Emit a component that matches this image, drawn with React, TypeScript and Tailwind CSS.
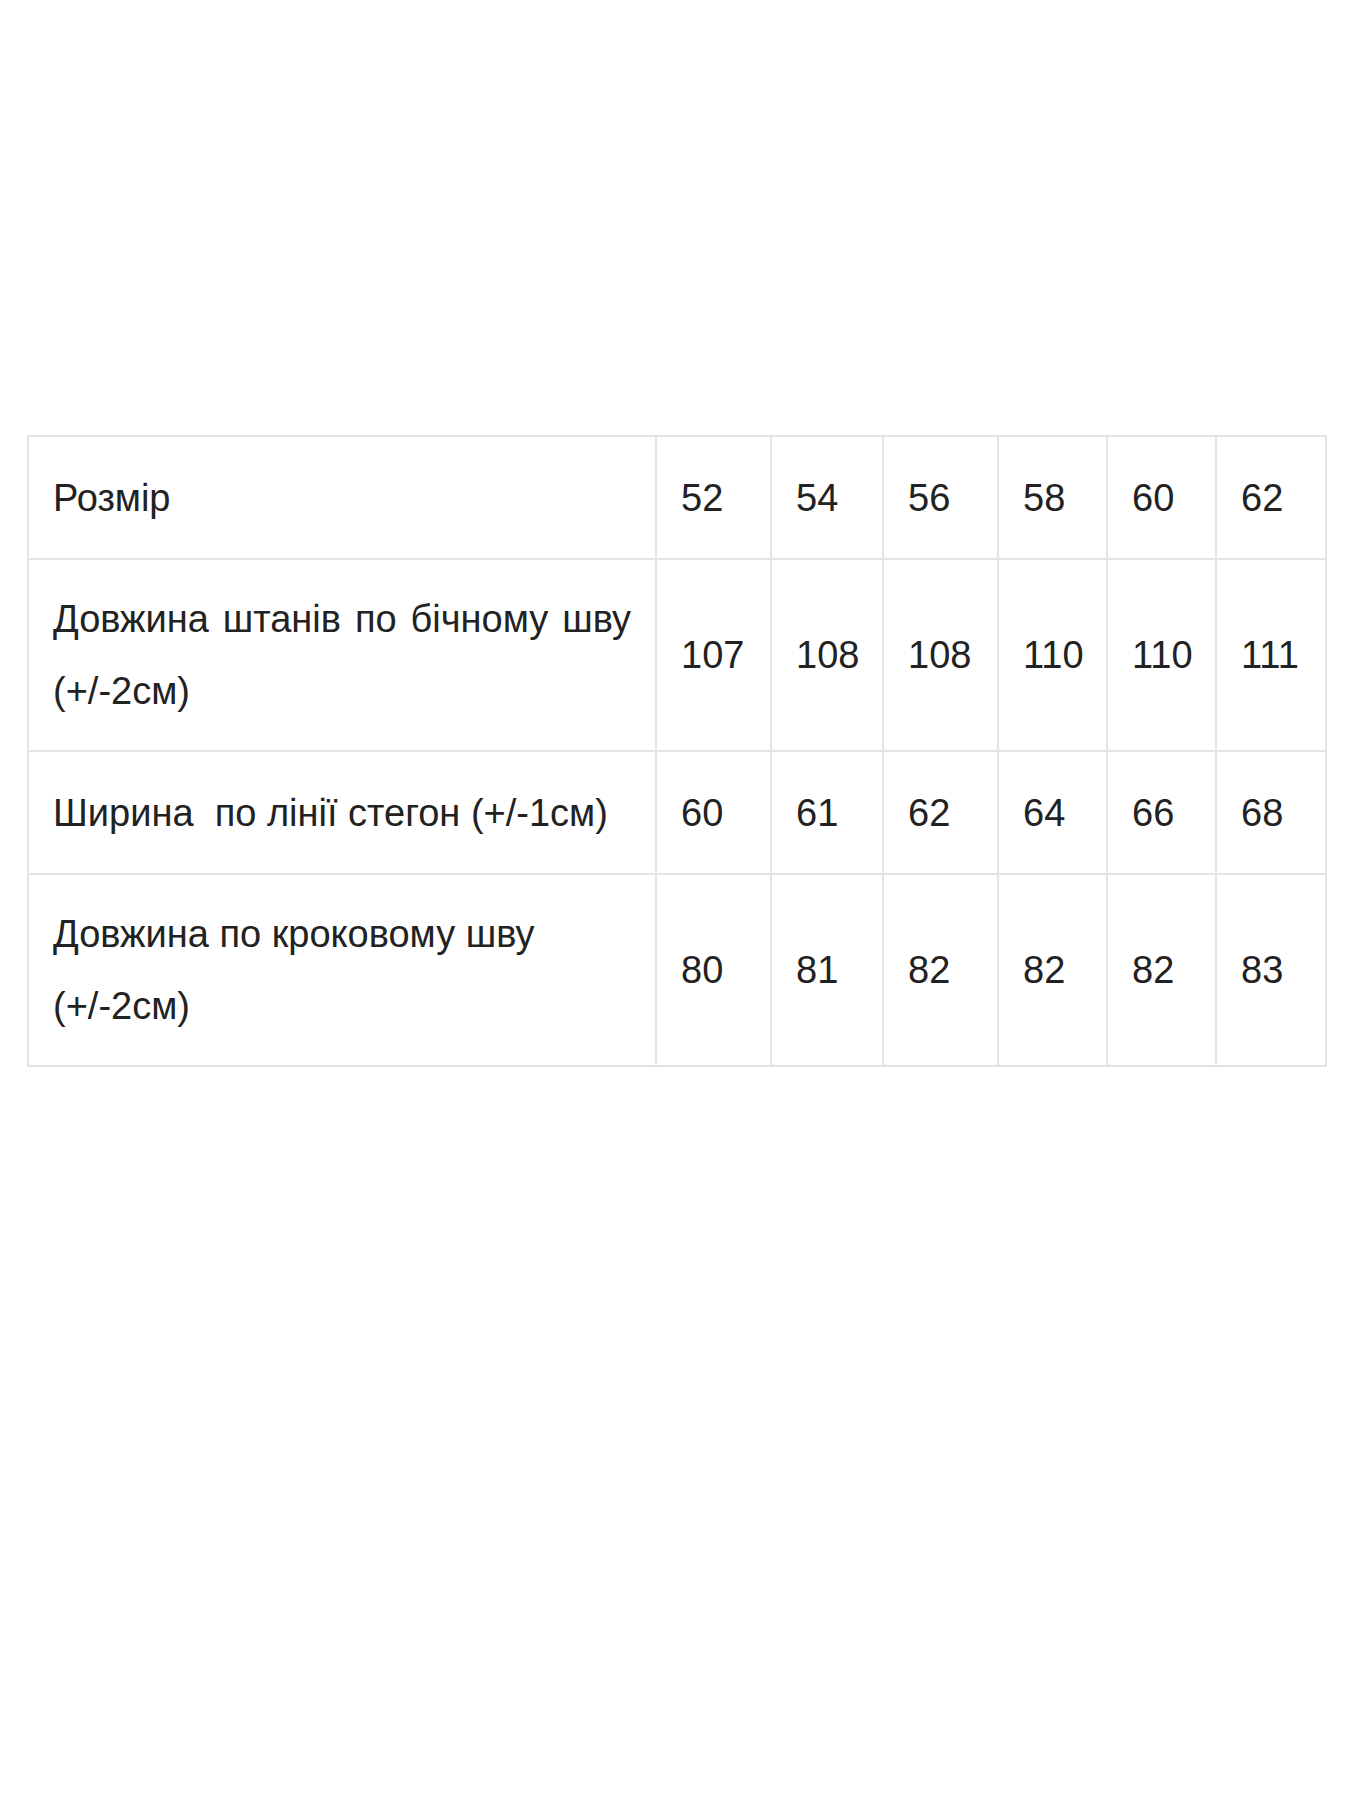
import React from 'react';

const sizes = ['52', '54', '56', '58', '60', '62'];

const rows: Array<{ label: React.ReactNode; values: string[]; tall: boolean }> = [
  {
    label: (
      <>
        <span className="block text-justify [text-align-last:justify]">Довжина штанів по бічному шву</span>
        <span className="block">(+/-2см)</span>
      </>
    ),
    values: ['107', '108', '108', '110', '110', '111'],
    tall: true,
  },
  {
    label: <span className="whitespace-pre">Ширина  по лінії стегон (+/-1см)</span>,
    values: ['60', '61', '62', '64', '66', '68'],
    tall: false,
  },
  {
    label: (
      <>
        <span className="block">Довжина по кроковому шву</span>
        <span className="block">(+/-2см)</span>
      </>
    ),
    values: ['80', '81', '82', '82', '82', '83'],
    tall: true,
  },
];

const cell = 'border-2 border-[#e3e3e3] px-[24px] py-[24.5px] align-middle';
const tallCell = 'border-2 border-[#e3e3e3] px-[24px] py-[23px] align-middle';

export default function App() {
  return (
    <div className="min-h-[1800px] bg-white pl-[27px] pt-[435px] font-['Liberation_Sans',Arial,sans-serif] text-[38px] leading-[72px] text-[#222]">
      <table className="w-[1298px] table-fixed border-collapse">
        <colgroup>
          <col className="w-[628px]" />
          <col className="w-[115px]" />
          <col className="w-[112px]" />
          <col className="w-[115px]" />
          <col className="w-[109px]" />
          <col className="w-[109px]" />
          <col className="w-[110px]" />
        </colgroup>
        <tbody>
          <tr>
            <td className={cell}>Розмір</td>
            {sizes.map((s, i) => (
              <td key={i} className={cell}>{s}</td>
            ))}
          </tr>
          {rows.map((row, r) => (
            <tr key={r}>
              <td className={row.tall ? tallCell : cell}>{row.label}</td>
              {row.values.map((v, i) => (
                <td key={i} className={row.tall ? tallCell : cell}>{v}</td>
              ))}
            </tr>
          ))}
        </tbody>
      </table>
    </div>
  );
}
